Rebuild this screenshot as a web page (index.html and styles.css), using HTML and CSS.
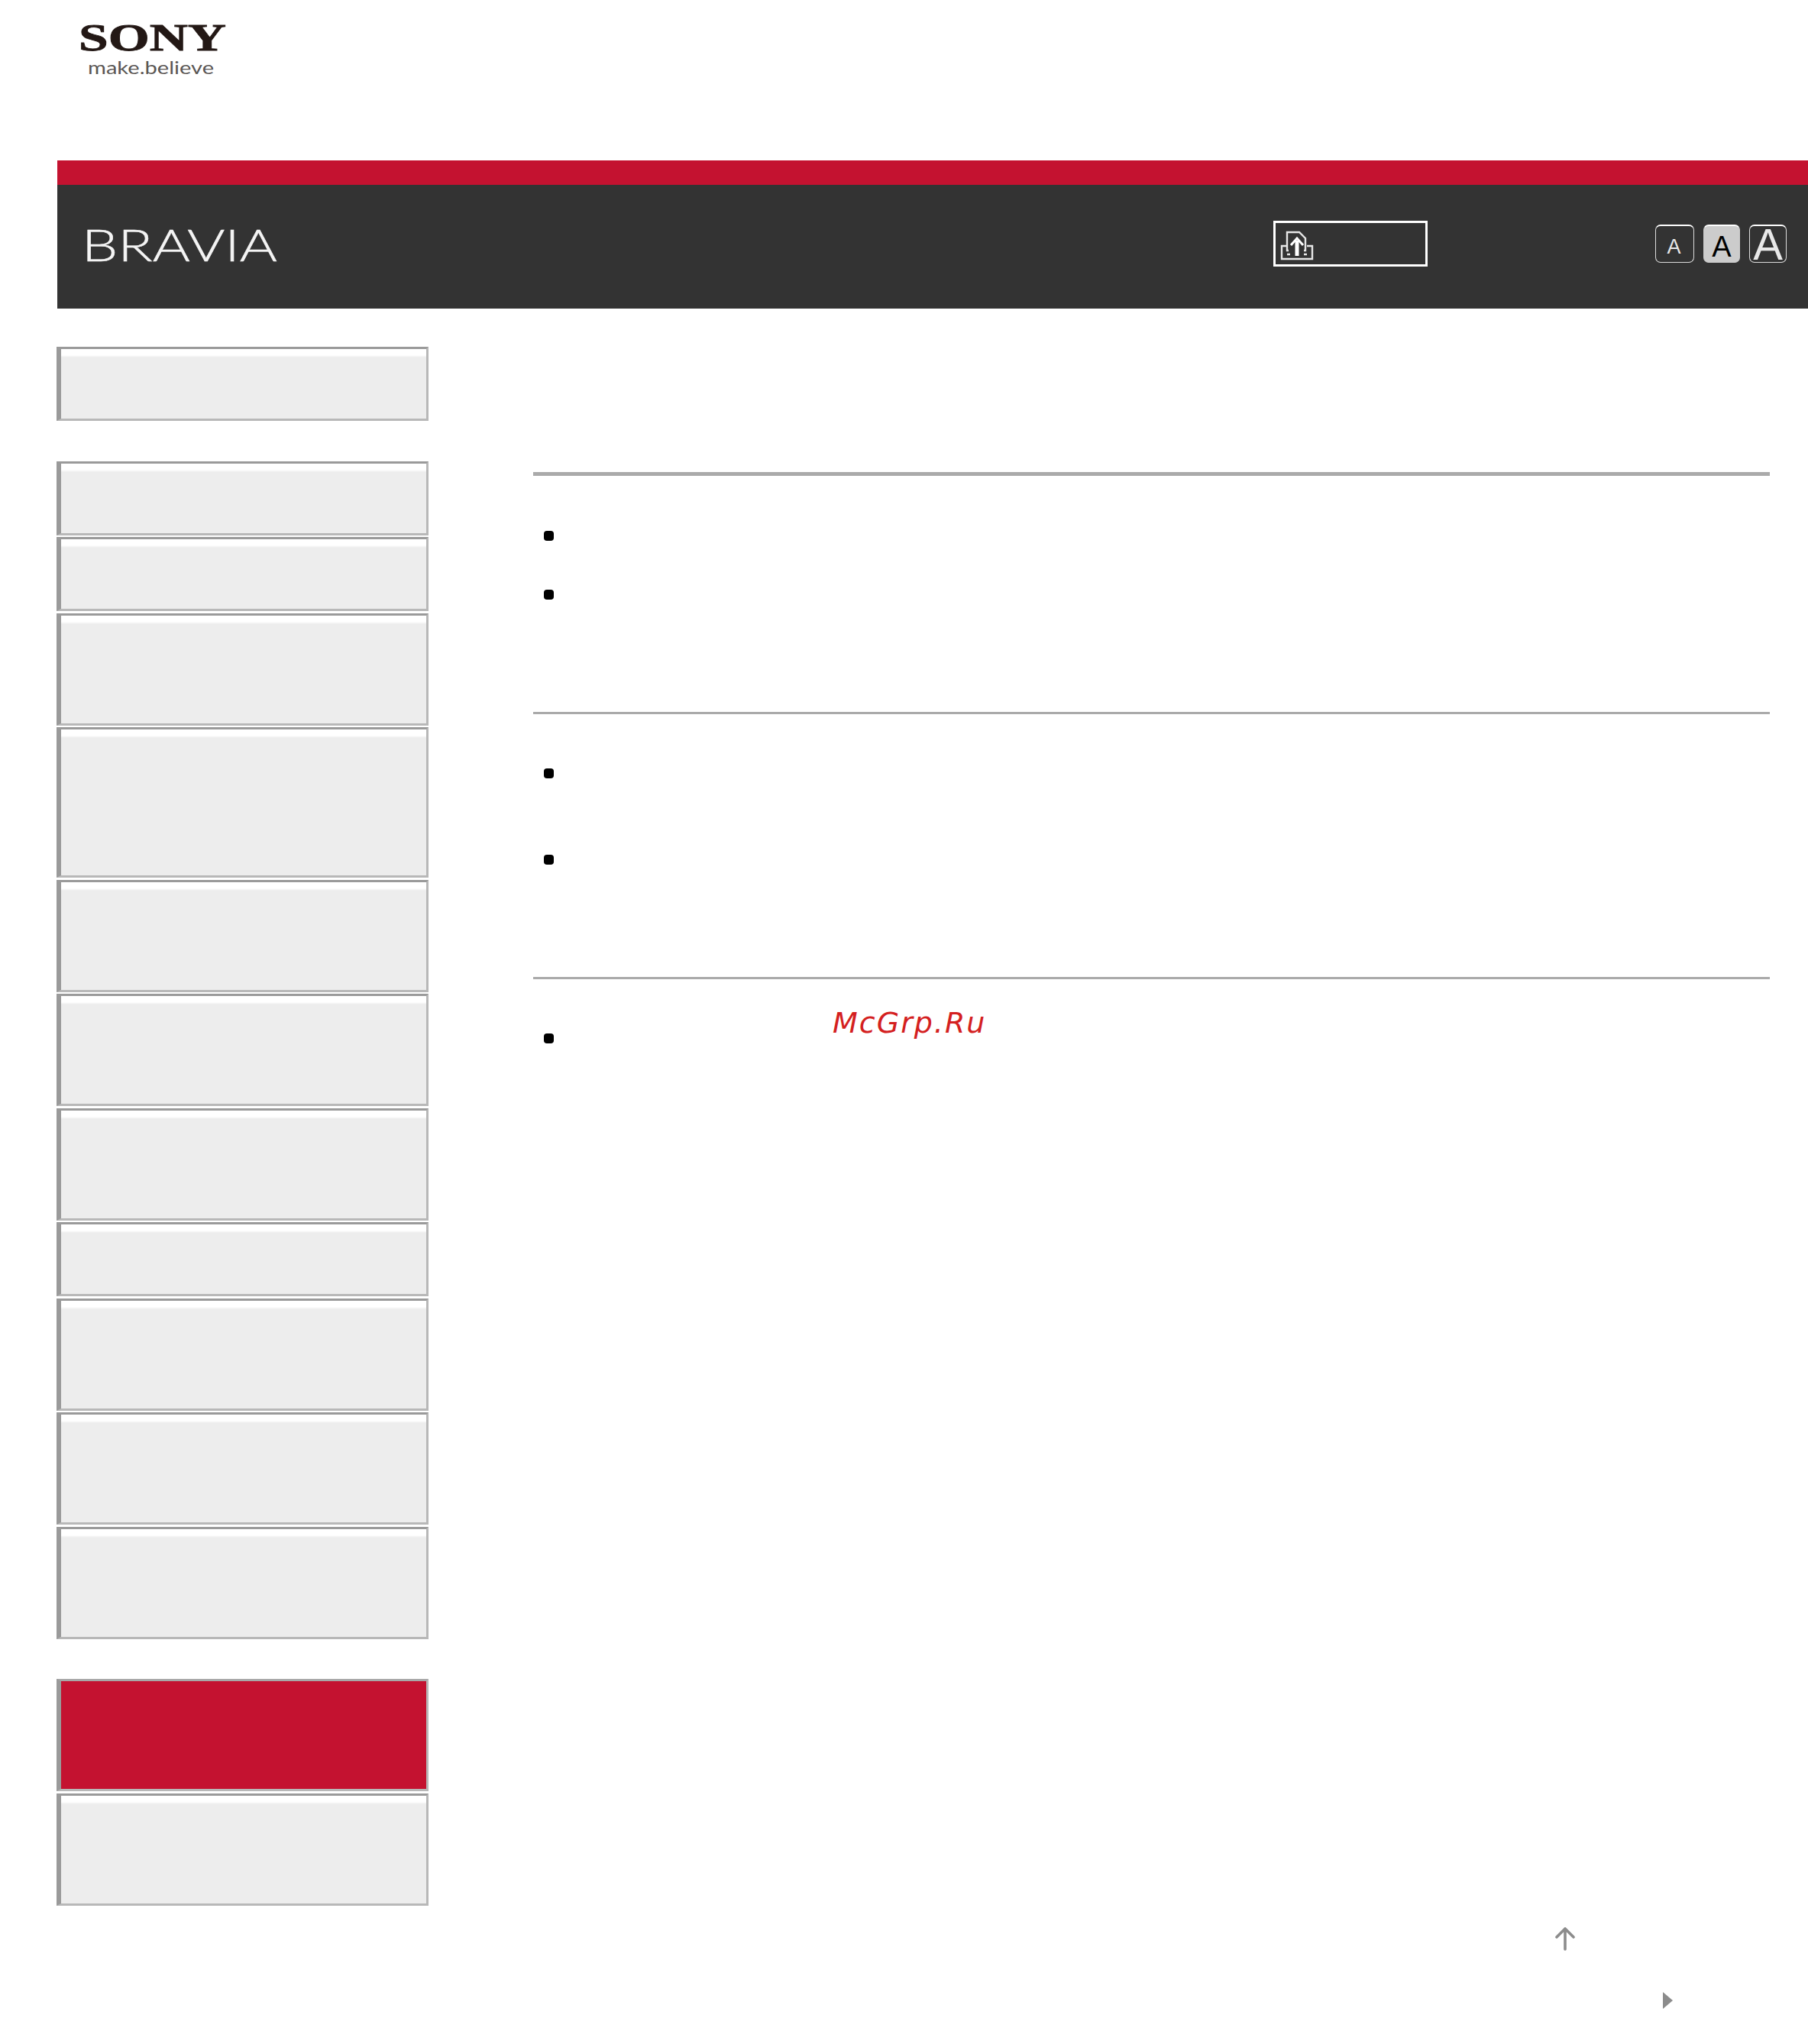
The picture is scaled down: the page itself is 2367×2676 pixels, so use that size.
FILE: index.html
```html
<!DOCTYPE html>
<html lang="en">
<head>
<meta charset="utf-8">
<title>BRAVIA Help Guide</title>
<link rel="stylesheet" href="styles.css">
</head>
<body>
<div class="page">
  <div class="brand">
    <svg class="sony" width="210" height="76" viewBox="0 0 210 76" aria-label="Sony make.believe">
      <text class="sony-word" x="4" y="37" textLength="193" lengthAdjust="spacingAndGlyphs">SONY</text>
      <text class="sony-tag" x="16" y="68" textLength="165" lengthAdjust="spacingAndGlyphs">make.believe</text>
    </svg>
  </div>
  <header class="header">
    <div class="redbar"></div>
    <div class="darkbar">
      <svg class="bravia" width="270" height="56" viewBox="0 0 270 56" aria-label="BRAVIA">
        <text class="bravia-word" x="5" y="48" textLength="256" lengthAdjust="spacingAndGlyphs">BRAVIA</text>
      </svg>
      <a class="upload">
        <svg width="44" height="40" viewBox="0 0 44 40" fill="none" stroke="#e6e6e6" stroke-width="2.4">
          <path d="M11 27H9V3h16l8 8v16h-2"/>
          <path d="M9 21H2v17h40V21h-7"/>
          <path d="M9 32h4M31 32h4"/>
          <path d="M22 34V14" stroke="#fff" stroke-width="5"/>
          <path d="M14 20l8-9 8 9" stroke="#fff" stroke-width="3"/>
        </svg>
      </a>
      <div class="sizes">
        <span class="size size-s">A</span>
        <span class="size size-m">A</span>
        <span class="size size-l">A</span>
      </div>
    </div>
  </header>
  <div class="layout">
    <nav class="sidebar">
      <div class="group">
        <a class="item one"></a>
      </div>
      <div class="group">
        <a class="item one"></a>
        <a class="item one"></a>
        <a class="item two"></a>
        <a class="item three"></a>
        <a class="item two"></a>
        <a class="item two"></a>
        <a class="item two"></a>
        <a class="item one"></a>
        <a class="item two"></a>
        <a class="item two"></a>
        <a class="item two"></a>
      </div>
      <div class="group">
        <a class="item two active"></a>
        <a class="item two"></a>
      </div>
    </nav>
    <main class="content">
      <section class="sec sec-a">
        <hr class="rule rule-thick">
        <ul class="list">
          <li class="dot"></li>
          <li class="dot"></li>
        </ul>
      </section>
      <section class="sec sec-b">
        <hr class="rule">
        <ul class="list">
          <li class="dot"></li>
          <li class="dot"></li>
        </ul>
      </section>
      <section class="sec sec-c">
        <hr class="rule">
        <ul class="list">
          <li class="dot"></li>
        </ul>
        <span class="watermark">McGrp.Ru</span>
      </section>
      <footer class="foot">
        <svg class="to-top" width="26" height="31" viewBox="0 0 26 31" fill="none" stroke="#8c8c8c" stroke-width="3.6" stroke-linecap="round" stroke-linejoin="round">
          <path d="M13 29V3M2 13L13 2l11 11"/>
        </svg>
        <svg class="next" width="13" height="22" viewBox="0 0 13 22"><path d="M0 0l13 11L0 22z" fill="#8c8c8c"/></svg>
      </footer>
    </main>
  </div>
</div>
</body>
</html>
```

FILE: styles.css
```css
* { box-sizing: border-box; }
html, body { margin: 0; padding: 0; background: #fff; }
.page { width: 2367px; height: 2676px; overflow: hidden; padding-left: 74px; }

.brand { height: 210px; padding: 29px 0 0 25px; }
.sony { display: block; overflow: visible; }
.sony-word { font-family: "Liberation Serif", serif; font-weight: 700; font-size: 50px; fill: #231815; stroke: #231815; stroke-width: 0.8px; }
.sony-tag { font-family: "Lato", sans-serif; font-size: 23px; fill: #5a5654; }

.header { margin-left: 1px; }
.redbar { height: 32px; background: #c41230; }
.darkbar { height: 162px; background: #333; display: flex; align-items: flex-start; padding: 47px 28px 0 27px; }
.bravia { display: block; margin-top: 5px; overflow: visible; }
.bravia-word { font-family: "Lato", sans-serif; font-weight: 300; font-size: 58px; fill: #f4f4f4; stroke: #f4f4f4; stroke-width: 0.5px; }

.upload { margin-left: auto; margin-right: 298px; width: 202px; height: 60px; border: 3px solid #fff; display: block; padding: 9px 0 0 6px; }
.upload svg { display: block; }

.sizes { display: flex; margin-top: 5px; gap: 12px; }
.size { width: 50px; height: 50px; border: 1px solid #ddd; border-top: 2px solid #fff; border-radius: 7px; display: flex; align-items: center; justify-content: center; font-family: "Liberation Sans", sans-serif; color: #e8e8e8; line-height: 1; }
.size-s { font-size: 27px; padding: 8px 2px 0 0; width: 51px; }
.size-m { font-size: 38px; background: #ccc; color: #000; width: 48px; border-color: #ccc; border-top-color: #fff; padding-top: 6px; }
.size-l { font-size: 58px; font-weight: 400; width: 49px; }

.layout { display: flex; align-items: flex-start; }
.sidebar { width: 487px; padding-top: 50px; display: flex; flex-direction: column; gap: 52.5px; }
.group { display: flex; flex-direction: column; gap: 2.5px; }
.item { display: block; background: linear-gradient(#fff 0, #fff 8px, #ededed 11px); border-style: solid; border-color: #9a9a9a #b8b8b8 #b8b8b8 #9a9a9a; border-width: 3px 3px 3px 6px; }
.one { height: 97px; }
.two { height: 147px; }
.three { height: 197px; }
.active { background: #c41230; border-top-color: #a8a8a8; }

.content { margin-left: 137px; width: 1619px; padding-top: 214px; }
.rule { margin: 0; border: 0; height: 3px; background: #aaa; }
.rule-thick { height: 5px; }
.list { list-style: none; margin: 0; padding: 71px 0 0 14px; display: flex; flex-direction: column; }
.dot { width: 13px; height: 13px; background: #000; border-radius: 4px; }
.sec-a .list { padding-top: 72px; gap: 64px; padding-bottom: 147px; }
.sec-b .list { gap: 100px; padding-bottom: 147px; }
.sec-c { position: relative; }
.watermark { position: absolute; left: 392px; top: 41px; font-family: "DejaVu Sans", sans-serif; font-style: oblique; font-size: 38px; letter-spacing: 2px; color: #d42020; line-height: 1; }

.foot { margin-top: 1157px; display: flex; flex-direction: column; align-items: flex-end; }
.to-top { display: block; margin-right: 255px; }
.next { display: block; margin-top: 54px; margin-right: 127px; }
```
